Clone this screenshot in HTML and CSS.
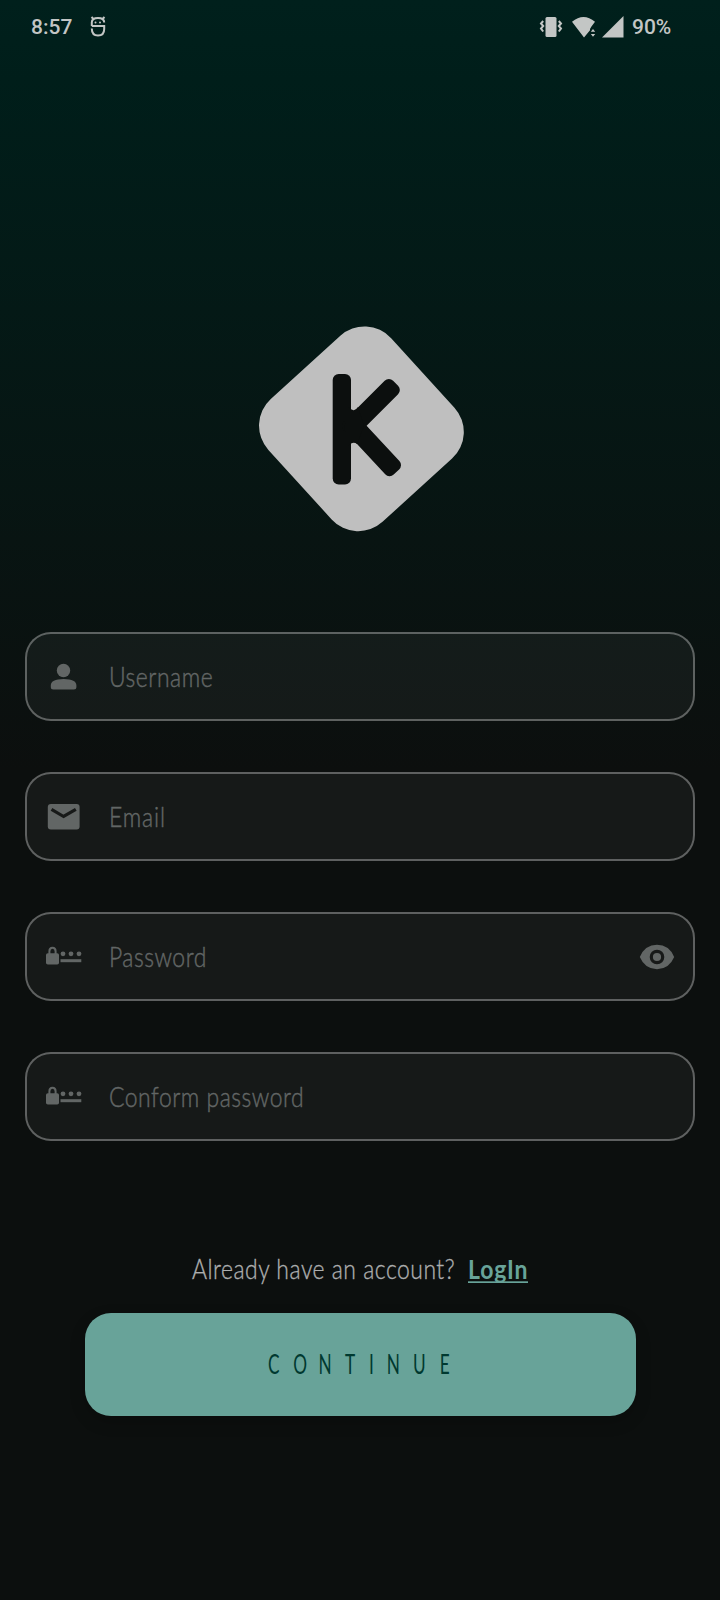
FILE: index.html
```html
<!DOCTYPE html>
<html lang="en">
<head>
<meta charset="utf-8">
<title>Sign up</title>
<link rel="stylesheet" href="styles.css">
</head>
<body>
<main class="screen">
  <header class="status">
    <span class="time">8:57</span>
    <svg class="bug" width="16" height="22" viewBox="0 0 16 22"><path d="M1.8 10V6.5Q1.8 2 8 2T14.2 6.5M1.8 10H14.2V13Q14.2 19.5 8 19.5T1.8 12.5M1.5 1L4 3.5M14.5 1L12 3.5" fill="none" stroke="currentColor" stroke-width="2"/><circle cx="5.5" cy="6.5" r="1"/><circle cx="10" cy="6.5" r="1"/></svg>
    <svg class="vibrate" width="22" height="20" viewBox="0 0 22 20"><rect x="5.5" y="0" width="11" height="20" rx="1.5"/><path d="M3.2 4L1 6.5 3.2 9 1 11.5 3.2 14.5M18.8 4L21 6.5 18.8 9 21 11.5 18.8 14.5" fill="none" stroke="currentColor" stroke-width="2"/></svg>
    <svg class="wifi" width="25" height="21" viewBox="0 0 25 21"><path d="M0 4.8Q11.5-4.8 23 4.8L19.3 9.7 18 12 18 13.3 12 20.5Z"/><path d="M18.8 14.8L21 12 23.2 14.8ZM18.8 17L21 19.8 23.2 17Z"/></svg>
    <svg class="signal" width="22" height="22" viewBox="0 0 22 22"><path d="M21.5 0V21.5H0Z"/></svg>
    <span class="battery">90%</span>
  </header>

  <svg class="logo" width="240" height="240" viewBox="0 0 240 240">
    <rect class="logo-tile" x="38.5" y="36" width="166" height="166" rx="36" transform="rotate(-42.3 121.2 119)"/>
    <rect x="92.7" y="64" width="18.3" height="110.5" rx="6"/>
    <rect x="-70" y="-9.5" width="70" height="19" rx="6" transform="translate(155.6 73.2) rotate(-45)"/>
    <rect x="-70" y="-9.7" width="70" height="19.4" rx="6" transform="translate(156.4 162) rotate(47)"/>
    <path d="M108 97Q111 100 113.5 100.2T118 97L124 116 117 134Q115.500 132.800 113.500 132.800T108 136Z"/>
  </svg>

  <form class="fields">
    <label class="field">
      <svg class="icon" width="36" height="36" viewBox="0 0 36 36"><circle cx="17.5" cy="11.5" r="6.7"/><path d="M4.800 26.500Q4.800 20 17.600 20T30.400 26.500V28Q30.400 30.500 27.900 30.500H7.300Q4.800 30.500 4.800 28Z"/></svg>
      <svg class="hint" width="120" height="36"><text transform="scale(.85 1)" x="0" y="28" textLength="122">Username</text></svg>
    </label>
    <label class="field">
      <svg class="icon" width="36" height="36" viewBox="0 0 36 36"><rect x="1.8" y="5" width="31.8" height="25.5" rx="3"/><path class="fold" d="M5.5 10.3L17.6 17.5 29.8 10.3"/></svg>
      <svg class="hint" width="120" height="36"><text transform="scale(.85 1)" x="0" y="28" textLength="66">Email</text></svg>
    </label>
    <label class="field">
      <svg class="icon" width="36" height="36" viewBox="0 0 36 36"><rect x="0" y="14.3" width="13" height="11.2" rx="1.8"/><path d="M3.4 15V12.3Q3.4 8.7 6.5 8.7T9.6 12.3V15" fill="none" stroke="currentColor" stroke-width="2"/><circle cx="17" cy="14.8" r="2.4"/><circle cx="25" cy="14.8" r="2.4"/><circle cx="33" cy="14.8" r="2.4"/><rect x="14.5" y="20.2" width="20.8" height="3"/></svg>
      <svg class="hint" width="120" height="36"><text transform="scale(.85 1)" x="0" y="28" textLength="114.500">Password</text></svg>
      <svg class="eye" width="36" height="36" viewBox="0 0 36 36"><path d="M.8 18Q6 5.800 18 5.800T35.200 18Q30 30.200 18 30.200T.8 18Z"/><circle class="fold" cx="18" cy="18" r="5.700"/></svg>
    </label>
    <label class="field">
      <svg class="icon" width="36" height="36" viewBox="0 0 36 36"><rect x="0" y="14.3" width="13" height="11.2" rx="1.8"/><path d="M3.4 15V12.3Q3.4 8.7 6.5 8.7T9.6 12.3V15" fill="none" stroke="currentColor" stroke-width="2"/><circle cx="17" cy="14.8" r="2.4"/><circle cx="25" cy="14.8" r="2.4"/><circle cx="33" cy="14.8" r="2.4"/><rect x="14.5" y="20.2" width="20.8" height="3"/></svg>
      <svg class="hint" width="220" height="36"><text transform="scale(.85 1)" x="0" y="28" textLength="229">Conform password</text></svg>
    </label>
  </form>

  <div class="account">
    <svg width="264" height="40"><text transform="scale(.85 1)" x="0" y="30" textLength="309">Already have an account?</text></svg>
    <a class="login"><svg width="60" height="40"><text transform="scale(.85 1)" x="0" y="30" textLength="70">LogIn</text><rect x="0" y="32.3" width="60" height="1.7"/></svg></a>
  </div>
  <div class="button">
    <svg width="188" height="40"><text transform="scale(.65 1)" y="29.500" x="1.4 40.3 79.2 120 157 184.3 224.6 265.8">CONTINUE</text></svg>
  </div>
</main>
</body>
</html>
```
FILE: styles.css
```css
body { margin: 0; background: #0c0f0e; }
svg { display: block; flex: none; fill: currentColor; overflow: visible; }
.screen {
  box-sizing: border-box;
  width: 720px;
  height: 1600px;
  padding: 0 25px;
  display: flex;
  flex-direction: column;
  background: linear-gradient(#00201c 0, #001e1a 80px, #0c0f0e 770px);
  font-family: Lato, "Open Sans", sans-serif;
  font-weight: 300;
  font-size: 27px;
}
.status {
  height: 54px;
  box-sizing: border-box;
  padding: 0 24px 0 6px;
  display: flex;
  align-items: center;
  color: #c3c6c5;
  font-family: Roboto, sans-serif;
  font-weight: 500;
  font-size: 21px;
}
.time { width: 41px; }
.bug { margin-left: 18px; }
.vibrate { margin-left: auto; }
.wifi { margin-left: 10px; }
.signal { margin-left: 5px; }
.battery { margin-left: 8px; width: 39px; }
.logo { margin: 256px 0 0 215px; color: #0c0f0e; }
.logo-tile { fill: #bfbfbf; }
.fields { display: flex; flex-direction: column; gap: 51px; margin-top: 82px; }
.field {
  box-sizing: border-box;
  height: 89px;
  padding: 0 19px;
  display: flex;
  align-items: center;
  border: 2px solid rgba(255, 255, 255, 0.34);
  border-radius: 26px;
  background: rgba(255, 252, 248, 0.045);
  background-clip: padding-box;
  color: #626665;
}
.fold { fill: none; stroke: #171918; stroke-width: 3.2; }
.hint { margin-left: 26.5px; }
.hint text { stroke: currentColor; stroke-width: 0.45; }
.eye { margin-left: auto; margin-right: -1px; }
.account {
  margin: 108px 0 0 167px;
  display: flex;
  gap: 12px;
  color: #acaeae;
}
.account > svg text { stroke: currentColor; stroke-width: 0.35; }
.login { color: #68a399; font-weight: 700; }
.button {
  box-sizing: border-box;
  width: 551px;
  height: 103px;
  margin: 24px 0 0 59.5px;
  padding-left: 2px;
  display: flex;
  align-items: center;
  justify-content: center;
  border-radius: 26px;
  background: #68a399;
  box-shadow: 0 6px 16px rgba(0, 0, 0, 0.2);
  color: #003930;
  font-weight: 400;
  font-size: 26.5px;
}
```
